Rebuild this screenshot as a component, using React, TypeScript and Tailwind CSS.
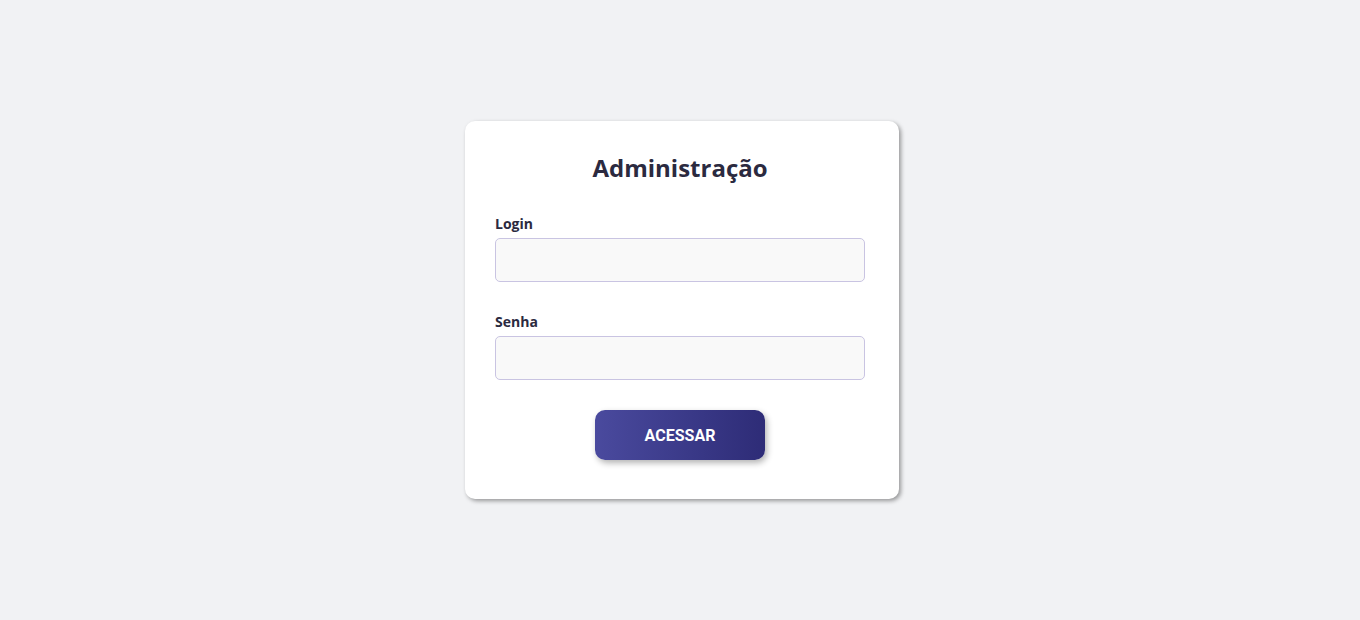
import React from 'react';

export default function App() {
  return (
    <div className="w-full h-[620px] bg-[#f1f2f4] flex items-center justify-center" style={{ fontFamily: '"Open Sans", sans-serif' }}>
      <div className="ml-[4px] w-[434px] h-[378px] bg-white rounded-[10px] shadow-[2px_2px_4px_rgba(0,0,0,0.38)] pl-[30px] pr-[34px] pt-[30px] flex flex-col">
        <h1 className="text-[24px] leading-[33px] font-bold text-[#2b2a3f] text-center">Administração</h1>

        <label className="mt-[30px] text-[14px] leading-[19px] font-bold text-[#2b2a3f]">Login</label>
        <input type="text" className="mt-[5px] h-[44px] w-full bg-[#f9f9f9] border border-[#c9c4e2] rounded-[5px] outline-none px-3" />

        <label className="mt-[30px] text-[14px] leading-[19px] font-bold text-[#2b2a3f]">Senha</label>
        <input type="password" className="mt-[5px] h-[44px] w-full bg-[#f9f9f9] border border-[#c9c4e2] rounded-[5px] outline-none px-3" />

        <div className="mt-[30px] flex justify-center">
          <button
            className="w-[170px] h-[50px] pt-[2px] rounded-[10px] bg-gradient-to-r from-[#4a4a9e] to-[#2e2c77] text-white text-[16px] font-bold shadow-[2px_3px_6px_rgba(0,0,0,0.3)]"
            style={{ fontFamily: 'Roboto, sans-serif' }}
          >
            ACESSAR
          </button>
        </div>
      </div>
    </div>
  );
}
